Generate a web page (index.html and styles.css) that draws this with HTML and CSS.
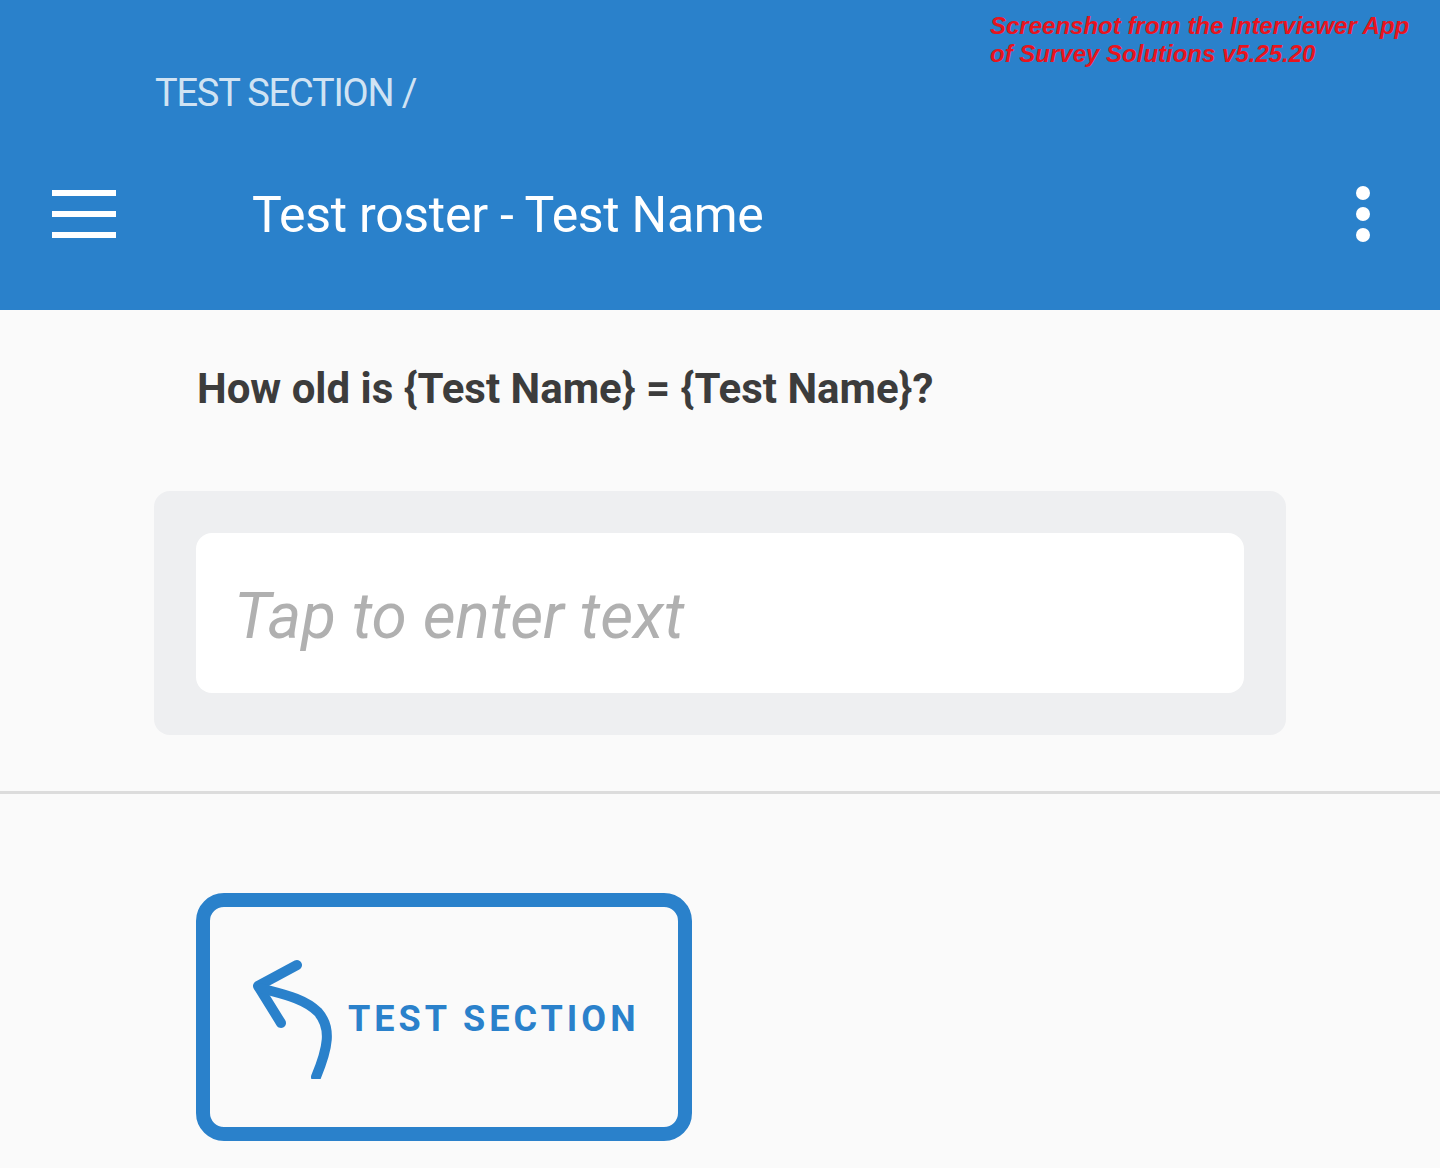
FILE: index.html
```html
<!DOCTYPE html>
<html lang="en">
    <head>
        <meta charset="UTF-8" />
        <meta name="viewport" content="width=device-width, initial-scale=1.0" />
        <title>Interviewer</title>
        <link rel="stylesheet" href="styles.css">
    </head>
    <body>
        <header class="appbar">
            <div class="breadcrumb">TEST SECTION /</div>
            <div class="toolbar">
                <button class="icon-btn menu-btn" aria-label="Menu">
                    <svg width="64" height="48" viewBox="0 0 64 48">
                        <rect x="0" y="0" width="64" height="6" fill="#fff" />
                        <rect x="0" y="21" width="64" height="6" fill="#fff" />
                        <rect x="0" y="42" width="64" height="6" fill="#fff" />
                    </svg>
                </button>
                <h1 class="title">Test roster - Test Name</h1>
                <button class="icon-btn more-btn" aria-label="More">
                    <svg width="16" height="58" viewBox="0 0 16 58">
                        <circle cx="8" cy="8" r="7" fill="#fff" />
                        <circle cx="8" cy="29" r="7" fill="#fff" />
                        <circle cx="8" cy="50" r="7" fill="#fff" />
                    </svg>
                </button>
            </div>
            <p class="watermark">Screenshot from the Interviewer App<br>of Survey Solutions v5.25.20</p>
        </header>

        <main class="content">
            <section class="question">
                <h2 class="question-text">How old is {Test Name} = {Test Name}?</h2>
                <div class="answer-box">
                    <div class="answer-input">Tap to enter text</div>
                </div>
            </section>

            <hr class="divider" />

            <div class="nav-section">
                <button class="back-btn">
                    <svg width="80" height="124" viewBox="0 0 80 124">
                        <path d="M45 10 L6 31 L29 68" fill="none" stroke="#2a81cb" stroke-width="10" stroke-linecap="round" stroke-linejoin="round" />
                        <path d="M8 33 C30 39 52 43 66 57 C80 73 76 93 64 122" fill="none" stroke="#2a81cb" stroke-width="10" stroke-linecap="round" />
                    </svg>
                    <span>TEST SECTION</span>
                </button>
            </div>
        </main>
    </body>
</html>
```

FILE: styles.css
```css
* {
    box-sizing: border-box;
}

body {
    margin: 0;
    font-family: Roboto, "Noto Sans", Arial, sans-serif;
    background: #fafafa;
}

.appbar {
    position: relative;
    height: 310px;
    background: #2a81cb;
    color: white;
}

.breadcrumb {
    padding: 74px 0 0 155px;
    font-size: 38px;
    line-height: 38px;
    letter-spacing: -1.2px;
    color: rgba(255, 255, 255, 0.8);
}

.toolbar {
    display: flex;
    align-items: center;
    height: 106px;
    margin-top: 49px;
    padding: 0 69px 0 52px;
}

.icon-btn {
    display: flex;
    padding: 0;
    background: none;
    border: none;
}

.title {
    flex: 1;
    margin: 2px 0 0 136px;
    font-size: 50px;
    font-weight: normal;
    letter-spacing: -0.3px;
}

.watermark {
    position: absolute;
    top: 12px;
    left: 990px;
    margin: 0;
    font-family: "Liberation Sans", Arial, sans-serif;
    font-size: 24px;
    line-height: 28px;
    font-weight: bold;
    font-style: italic;
    color: #e8141e;
}

.question {
    padding: 55px 0 0 154px;
}

.question-text {
    margin: 0 0 78px 43px;
    font-size: 42px;
    line-height: 48px;
    font-weight: bold;
    color: #3c3c3c;
}

.answer-box {
    width: 1132px;
    padding: 42px;
    background: #eeeff1;
    border-radius: 16px;
}

.answer-input {
    height: 160px;
    padding: 6px 0 0 38px;
    display: flex;
    align-items: center;
    background: white;
    border-radius: 16px;
    font-size: 64px;
    font-style: italic;
    color: #b0b0b0;
}

.divider {
    margin: 56px 0 0;
    border: none;
    height: 3px;
    background: #dcdcdc;
}

.nav-section {
    padding: 99px 0 0 196px;
}

.back-btn {
    display: flex;
    align-items: center;
    gap: 16px;
    width: 496px;
    height: 248px;
    padding: 0 0 0 42px;
    background: none;
    border: 14px solid #2a81cb;
    border-radius: 28px;
    font-family: Roboto, Arial, sans-serif;
    font-size: 36px;
    font-weight: bold;
    letter-spacing: 4px;
    color: #2a81cb;
}

.back-btn span {
    margin-top: 4px;
}
```
